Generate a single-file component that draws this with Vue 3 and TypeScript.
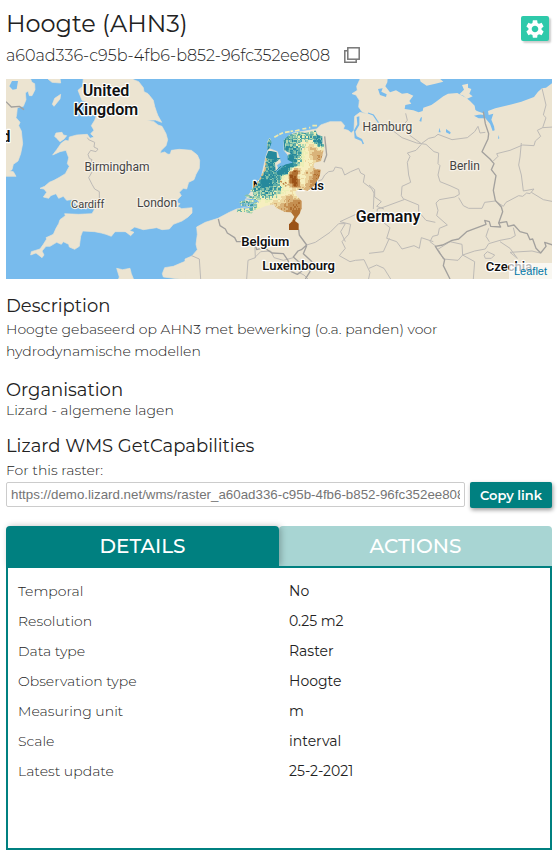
<script setup lang="ts">
import { computed, ref } from 'vue'

type Tab = 'details' | 'actions'

const uuid = 'a60ad336-c95b-4fb6-b852-96fc352ee808'
const wmsUrl = ref(`https://demo.lizard.net/wms/raster_${uuid}`)
const activeTab = ref<Tab>('details')

const details: { label: string; value: string }[] = [
  { label: 'Temporal', value: 'No' },
  { label: 'Resolution', value: '0.25 m2' },
  { label: 'Data type', value: 'Raster' },
  { label: 'Observation type', value: 'Hoogte' },
  { label: 'Measuring unit', value: 'm' },
  { label: 'Scale', value: 'interval' },
  { label: 'Latest update', value: '25-2-2021' },
]

function copy(text: string): void {
  navigator.clipboard?.writeText(text)
}

// Height raster: sample points (x, y, height 0..1) interpolated over a small grid.
const samples: [number, number, number][] = [
  [265, 240, 0], [262, 262, 0.1], [255, 300, 0.08], [238, 325, 0], [250, 345, 0.15], [275, 335, 0.2],
  [262, 285, 0.12], [225, 335, 0.1], [268, 318, 0.15], [262, 358, 0.3],
  [300, 285, 0], [285, 292, 0], [316, 270, 0], [320, 250, 0], [325, 205, 0.22], [370, 180, 0.3],
  [400, 193, 0.08], [305, 210, 0.15], [345, 185, 0.25], [412, 195, 0.15],
  [340, 228, 0.15], [335, 255, 0.25], [375, 216, 0.66], [400, 240, 0.74], [385, 232, 0.7],
  [350, 270, 0.48], [358, 235, 0.5], [366, 255, 0.58], [370, 290, 0.64], [362, 275, 0.55],
  [395, 300, 0.85], [385, 325, 0.8], [400, 290, 0.8], [370, 335, 0.72],
  [325, 312, 1], [318, 300, 0.95], [330, 290, 0.95], [334, 322, 0.95], [348, 320, 0.5], [345, 300, 0.52],
  [290, 322, 0.5], [300, 308, 0.5], [300, 345, 0.5], [270, 385, 0.66], [310, 370, 0.72], [285, 370, 0.58],
  [340, 388, 0.82], [320, 395, 0.82], [295, 395, 0.75], [330, 420, 0.88], [325, 455, 1],
  [230, 385, 0.55], [190, 385, 0.22], [175, 405, 0.35], [210, 360, 0.35], [220, 350, 0.25],
  [335, 350, 0.52], [350, 205, 0.4], [325, 225, 0.15],
]
const palette = [
  '#26899c', '#3c98a0', '#5fada6', '#86c3ac', '#b5d9b0', '#eceeb5',
  '#f6efbf', '#ecd7a0', '#d9b37a', '#c58f51', '#b06f30', '#9b5217',
]
const cell = 4

function noise(x: number, y: number): number {
  const n = Math.sin(x * 12.9898 + y * 78.233) * 43758.5453
  return n - Math.floor(n)
}

const rasterLayers = computed(() => {
  const paths: string[] = palette.map(() => '')
  for (let y = 160; y < 470; y += cell) {
    for (let x = 152; x < 424; x += cell) {
      let sum = 0
      let weight = 0
      for (const [sx, sy, h] of samples) {
        const d = (sx - x) ** 2 + (sy - y) ** 2 + 60
        const w = 1 / (d * d)
        sum += h * w
        weight += w
      }
      const base = sum / weight
      const spread = base < 0.06 ? 0.08 : base < 0.42 ? 0.36 : 0.07
      const h = base + (noise(x, y) - 0.45) * spread
      const i = Math.max(0, Math.min(palette.length - 1, Math.floor(h * palette.length)))
      paths[i] += `M${x} ${y}h${cell}v${cell}h-${cell}z`
    }
  }
  return palette.map((color, i) => ({ color, d: paths[i] }))
})
</script>

<template>
  <main class="panel">
    <header class="head">
      <div>
        <h1>Hoogte (AHN3)</h1>
        <div class="uuid">
          <span>{{ uuid }}</span>
          <button class="icon-button" type="button" aria-label="Copy UUID" @click="copy(uuid)">
            <svg viewBox="0 0 16 16" width="16" height="16" fill="none" stroke="#777" stroke-width="1.5">
              <path d="M3.8 3.8H.8v11.4h11.4v-3" />
              <rect x="3.8" y=".8" width="11.4" height="11.4" />
            </svg>
          </button>
        </div>
      </div>
      <button class="settings" type="button" aria-label="Settings">
        <svg viewBox="0 0 24 24" width="22" height="22" fill="#fff">
          <path d="M19.14 12.94c.04-.3.06-.61.06-.94 0-.32-.02-.64-.07-.94l2.03-1.58c.18-.14.23-.41.12-.61l-1.92-3.32c-.12-.22-.37-.29-.59-.22l-2.39.96c-.5-.38-1.03-.7-1.62-.94l-.36-2.54c-.04-.24-.24-.41-.48-.41h-3.84c-.24 0-.43.17-.47.41l-.36 2.54c-.59.24-1.13.57-1.62.94l-2.39-.96c-.22-.08-.47 0-.59.22L2.74 8.87c-.12.21-.08.47.12.61l2.03 1.58c-.05.3-.09.63-.09.94s.02.64.07.94l-2.03 1.58c-.18.14-.23.41-.12.61l1.92 3.32c.12.22.37.29.59.22l2.39-.96c.5.38 1.03.7 1.62.94l.36 2.54c.05.24.24.41.48.41h3.84c.24 0 .44-.17.47-.41l.36-2.54c.59-.24 1.13-.56 1.62-.94l2.39.96c.22.08.47 0 .59-.22l1.92-3.32c.12-.22.07-.47-.12-.61l-2.01-1.58zM12 15.6c-1.98 0-3.6-1.62-3.6-3.6s1.62-3.6 3.6-3.6 3.6 1.62 3.6 3.6-1.62 3.6-3.6 3.6z" />
        </svg>
      </button>
    </header>

    <div class="map">
      <svg viewBox="18 12 1638 600" preserveAspectRatio="xMidYMid slice" role="img" aria-label="Map">
        <defs>
          <clipPath id="raster-area">
            <path d="M258 228L275 232 276 248 287 250 270 264 272 288 285 274 322 262 308 254 308 240 318 236 298 226 296 196 312 180 345 170 360 174 392 166 398 180 412 184 412 205 419 210 416 225 408 258 388 264 385 276 392 282 407 284 405 300 400 312 385 335 368 348 345 342 330 350 335 362 350 378 350 400 344 416 334 430 330 438 341 446 341 465 312 465 312 448 320 440 328 425 318 412 300 411 288 405 275 400 265 388 240 394 220 402 205 406 200 416 180 410 155 412 158 402 196 398 190 392 168 392 163 380 180 376 192 380 196 370 178 362 186 358 205 366 204 352 195 346 214 332 228 306 240 282 243 245 250 228zM254 190L260 202 254 220 247 226 248 204z" />
          </clipPath>
        </defs>
        <rect x="0" y="0" width="1680" height="620" fill="#78bbed" />

        <g fill="#ece4d1" stroke="#ece4d1" stroke-width="2" stroke-linejoin="round">
          <path d="M250 8L397 8 401 14 416 20 430 38 432 50 444 56 460 76 464 94 470 112 474 122 485 142 466 135 440 136 462 140 474 150 486 154 498 176 503 194 498 212 484 226 480 235 494 231 504 238 511 237 514 226 538 223 574 226 592 240 599 256 598 280 588 298 582 314 566 322 560 342 550 340 538 352 544 362 534 372 528 382 540 386 532 394 545 401 576 398 576 414 564 426 546 438 520 448 508 462 486 464 470 458 430 464 404 456 384 470 345 470 334 484 318 478 304 474 284 470 248 468 242 484 238 514 224 523 208 516 206 508 190 500 184 508 170 502 150 514 138 514 126 528 132 540 126 548 108 534 92 540 94 530 120 522 130 508 140 492 138 488 160 478 168 460 176 446 180 434 196 422 194 416 236 418 276 416 284 402 274 392 240 394 226 386 214 374 200 376 190 364 176 370 168 356 152 362 146 370 130 366 140 352 132 342 120 340 134 334 148 322 162 316 180 306 196 296 208 274 202 266 206 248 198 226 180 230 158 240 170 224 184 204 196 196 206 198 208 186 230 180 262 178 270 190 282 186 272 176 282 166 274 152 284 136 290 120 270 116 262 104 266 90 258 80 246 76 234 46 248 34z" />
          <path d="M10 8H90L96 22 104 26 105 44 96 62 88 62 84 48 76 54 78 74 70 94 52 98 50 118 48 128 60 142 56 152 64 168 68 206 62 236 54 258 40 268 36 284 28 288 40 290 48 304 10 304z" />
          <path d="M182 58L180 72 162 94 157 88 164 70zM168 174L186 172 190 180 200 182 192 192 180 200 170 190 164 184zM144 12L156 22 182 24 180 10zM374 468L384 465 402 472 392 482zM354 616L358 606 350 580 368 584 390 580 394 596 402 616zM570 616L490 606 487 596 494 578 520 574 548 562 574 552z" />
          <path d="M555 620V552L576 543 592 524 588 508 592 478 590 456 616 442 654 430 688 412 710 402 745 396 736 374 760 340 784 306 798 244 806 220 832 230 842 262 830 270 836 290 878 262 864 240 852 226 852 196 880 174 950 162 962 150 990 140 1024 140 1034 152 1030 162 1044 166 1054 174 1062 166 1064 124 1080 112 1104 118 1086 110 1076 96 1078 76 1068 60 1056 56 1072 46 1070 34 1082 8H1670V620z" />
        </g>

        <g fill="#78bbed">
          <path d="M1163 8L1162 22 1156 34 1170 52 1188 46 1206 56 1222 54 1240 62 1228 78 1234 86 1216 90 1214 102 1240 106 1256 112 1268 108 1270 98 1294 90 1306 82 1330 64 1344 56 1372 54 1398 68 1410 78 1424 92 1426 104 1442 118 1422 122 1436 130 1456 130 1470 146 1478 168 1484 166 1482 154 1474 134 1480 116 1466 120 1464 108 1486 100 1536 88 1564 80 1602 66 1614 50 1626 40 1638 38 1660 22V8z" />
          <path d="M1134 42L1148 40 1144 50 1160 58 1158 66 1140 60zM1262 128L1266 126 1264 140 1258 138zM1318 158L1322 172 1316 172zM1338 162L1352 172 1350 178 1338 172zM1496 180L1498 190 1494 192zM36 18L54 18 50 42 38 44 28 34z" />
          <path d="M1062 166L1072 148 1070 126 1078 124 1078 150 1066 170 1070 184 1086 192 1092 206 1088 208 1084 198 1064 190z" />
        </g>
        <path d="M1104 114L1120 120 1132 138 1140 150" fill="none" stroke="#78bbed" stroke-width="4" />
        <g fill="#ece4d1">
          <path d="M1258 8L1262 20 1280 32 1306 26 1330 20 1316 8zM1386 30L1404 26 1404 38 1414 42 1408 56 1418 64 1400 72 1390 62 1378 58 1392 44zM1430 108L1448 114 1452 120 1436 118z" />
        </g>

        <g fill="none" stroke="#bdbab6" stroke-width="3" stroke-linejoin="round">
          <path d="M262 188L266 194 284 202 282 216 294 222 288 230 272 226 264 238 268 250 276 254 272 266 278 288 266 308 276 328 284 342 298 350 298 380" />
          <path d="M1217 115L1222 136 1212 148 1230 170 1228 180 1264 206 1286 190 1304 186 1314 178 1356 194 1402 188 1424 170 1434 154 1440 174 1456 172M1176 165L1206 188 1250 204 1278 208 1302 230 1316 234 1314 266 1320 272 1314 300 1320 320 1350 332 1376 344 1378 358 1364 366 1318 374 1308 384 1314 406 1310 422 1342 450 1318 460 1314 480 1298 484 1290 500 1308 514" />
          <path d="M1264 208L1248 226 1222 234 1230 244 1222 262 1226 300 1232 322 1206 334 1204 362 1212 374 1152 396 1132 402 1130 422 1102 428 1085 410 1020 440 1052 448 1046 478 1026 500 1036 520 1018 542 1050 560 1066 556 1092 554 1110 592 1104 620M1212 372L1256 390 1256 410 1278 436 1306 442M1160 490L1190 500 1206 522 1242 512 1258 520 1264 488 1300 500M1160 490L1170 458 1152 444" />
          <path d="M974 300L986 290 1000 288 1006 276 1026 280 1034 300 1052 290 1076 280 1082 294 1094 300 1090 322 1114 340 1122 354 1120 402M974 300L966 314 954 318" />
          <path d="M1376 368L1390 392 1406 400 1446 400 1454 382 1486 378 1510 394 1518 382 1556 362 1568 364 1580 354 1590 356 1602 342 1570 348 1564 300 1556 270 1560 246 1564 204M1480 258L1494 244 1490 236 1530 226 1568 210 1602 212 1606 198 1622 184 1612 166 1628 158 1660 156M1628 158L1638 128 1630 120 1638 90 1626 40M1594 352L1630 374 1660 380" />
          <path d="M1388 540L1424 528 1456 522 1466 506 1500 496 1532 490 1546 482 1540 458M1466 460L1458 484 1468 500M1388 540L1374 556 1330 552 1316 526M1388 540L1424 560 1420 612M1500 500L1530 520 1552 550 1530 532 1596 528 1620 534M1452 540L1462 530 1484 540 1474 550 1456 550zM1388 540L1386 508 1350 500 1312 524" />
          <path d="M920 510L946 502 990 472 1016 446 1036 446 1022 470 1036 500M896 592L912 600 924 612M764 496L766 548 744 556 740 612M764 548L782 530 812 528 822 548 850 556 880 548M575 542L598 552 602 612M1107 330L1124 344 1124 366 1144 380 1130 394 1152 402M1107 535L1150 530 1168 490M1107 580L1130 570 1152 580 1172 612" />
        </g>
        <g fill="none" stroke="#a3a19e" stroke-width="4" stroke-linejoin="round">
          <path d="M1450 110L1456 146 1466 176 1464 192 1446 230 1470 252 1482 266 1474 284 1488 302 1480 346 1486 376 1504 396 1508 410 1496 444 1502 456 1472 454 1468 440 1454 436 1458 448 1400 470 1376 492 1356 496 1328 510 1306 514 1320 536 1334 554 1330 572 1350 612" />
          <path d="M1496 444L1520 440 1524 454 1542 450 1560 470 1582 476 1590 494 1598 492 1608 520 1622 534 1638 514 1634 502 1658 510M18 80L34 96 58 94 72 104" />
          <path d="M655 432L660 452 676 462 682 474 704 488 710 500 742 500 762 496 770 524 792 518 816 534 850 536 864 556 874 590 892 598 906 588 900 564 880 546 894 528 904 524 920 510 898 480 896 464M920 512L910 536 936 560 930 590 916 612M972 262L980 240 974 184" />
        </g>

        <g class="country">
          <text x="318" y="63">United</text>
          <text x="318" y="121">Kingdom</text>
          <text x="18" y="200">d</text>
          <text class="mid" x="865" y="346">Netherlands</text>
          <text x="1164" y="440">Germany</text>
          <text class="mid" x="796" y="513">Belgium</text>
          <text class="mid" x="896" y="585">Luxembourg</text>
          <text class="mid" x="1527" y="587">Czechia</text>
        </g>
        <g class="city">
          <text x="351" y="289">Birmingham</text>
          <text class="small" x="263" y="398">Cardiff</text>
          <text x="471" y="396">London</text>
          <text x="1162" y="167">Hamburg</text>
          <text x="1394" y="285">Berlin</text>
        </g>

        <g transform="translate(555 0)">
          <path d="M250 220L248 204 256 190M268 187L280 180 294 173M300 172L324 168M330 168L346 164M352 162L364 160M372 158L376 158M382 152L398 152" fill="none" stroke="#efe9ad" stroke-width="5" stroke-dasharray="14 3" />
          <g clip-path="url(#raster-area)" shape-rendering="crispEdges">
            <path v-for="layer in rasterLayers" :key="layer.color" :d="layer.d" :fill="layer.color" />
          </g>
          <g fill="none" stroke="#78bbed" stroke-width="3">
            <path d="M168 386L196 388 218 376M184 372L206 374 222 382M176 400L202 396 214 388M274 290L300 266 322 262" />
          </g>
          <path d="M240 284L226 312 206 338M244 250L240 284" fill="none" stroke="#e2bd7b" stroke-width="4" stroke-dasharray="8 5" />
          <path d="M286 318L304 334M300 322L310 330M366 290V300" fill="none" stroke="#b87a3c" stroke-width="4" stroke-dasharray="6 4" />
        </g>
      </svg>
      <a class="attribution" href="https://leafletjs.com">Leaflet</a>
    </div>

    <section>
      <h2>Description</h2>
      <p>Hoogte gebaseerd op AHN3 met bewerking (o.a. panden) voor hydrodynamische modellen</p>
    </section>

    <section>
      <h2>Organisation</h2>
      <p class="tight">Lizard - algemene lagen</p>
    </section>

    <section>
      <h2>Lizard WMS GetCapabilities</h2>
      <label for="wms-url">For this raster:</label>
      <div class="link-row">
        <input id="wms-url" v-model="wmsUrl" type="text" readonly />
        <button class="copy" type="button" @click="copy(wmsUrl)">Copy link</button>
      </div>
    </section>

    <div class="tabs" role="tablist">
      <button type="button" role="tab" :aria-selected="activeTab === 'details'" :class="{ active: activeTab === 'details' }" @click="activeTab = 'details'">DETAILS</button>
      <button type="button" role="tab" :aria-selected="activeTab === 'actions'" :class="{ active: activeTab === 'actions' }" @click="activeTab = 'actions'">ACTIONS</button>
    </div>
    <div class="tab-body" role="tabpanel">
      <table v-if="activeTab === 'details'">
        <tbody>
          <tr v-for="row in details" :key="row.label">
            <th scope="row">{{ row.label }}</th>
            <td>{{ row.value }}</td>
          </tr>
        </tbody>
      </table>
    </div>
  </main>
</template>

<style>
body {
  background: #fff;
}
</style>

<style scoped>
.panel {
  box-sizing: border-box;
  min-height: 855px;
  padding: 8px 7px 5px 6px;
  display: flex;
  flex-direction: column;
  color: #222;
  font-family: Montserrat, Inter, sans-serif;
  font-size: 14px;
  font-weight: 300;
}
button {
  padding: 0;
  border: 0;
  font-family: inherit;
  cursor: pointer;
}
h1,
h2,
p {
  margin: 0;
  font-weight: 400;
}
h1 {
  font-size: 24px;
  line-height: 32px;
}
h2 {
  font-size: 18px;
  line-height: 24px;
}
p {
  font-weight: 300;
  line-height: 22px;
}
.tight {
  line-height: 16px;
}
.head {
  display: flex;
  justify-content: space-between;
  align-items: flex-start;
}
.uuid {
  display: flex;
  align-items: center;
  gap: 14px;
  height: 30px;
  margin-bottom: 9px;
  font-size: 16px;
}
.icon-button {
  display: flex;
  background: none;
}
.settings {
  display: flex;
  align-items: center;
  justify-content: center;
  width: 28px;
  height: 25px;
  margin: 8px 3px 0 0;
  border-radius: 2px;
  background: #2ec9aa;
  box-shadow: 2px 2px 2px rgba(0, 0, 0, 0.2);
}
.map {
  position: relative;
  height: 200px;
  margin-bottom: 15px;
  overflow: hidden;
}
.map > svg {
  display: block;
  width: 100%;
  height: 100%;
}
.country,
.city {
  font-family: Roboto, sans-serif;
  text-anchor: middle;
  paint-order: stroke;
  stroke: #fff;
  stroke-width: 7px;
  stroke-linejoin: round;
}
.country {
  fill: #111;
  font-size: 48px;
  font-weight: 600;
}
.country .mid {
  font-size: 39px;
}
.city {
  fill: #444;
  stroke: #f6f1e7;
  font-size: 36px;
  font-weight: 400;
}
.city .small {
  font-size: 33px;
}
.attribution {
  position: absolute;
  right: 0;
  bottom: 0;
  padding: 0 5px;
  background: rgba(255, 255, 255, 0.7);
  color: #0078a8;
  font: 11px/16px "Liberation Sans", Arial, sans-serif;
  text-decoration: none;
}
section {
  margin-bottom: 16px;
}
label {
  display: block;
  line-height: 24px;
}
.link-row {
  display: flex;
  align-items: flex-start;
  gap: 5px;
}
.link-row input {
  box-sizing: border-box;
  flex: 1;
  min-width: 0;
  height: 25px;
  padding: 0 4px;
  border: 1px solid #ccc;
  border-radius: 2px;
  color: #757575;
  font-family: "Liberation Sans", Arial, sans-serif;
}
.copy {
  width: 82px;
  height: 26px;
  border-radius: 2px;
  background: #008080;
  color: #fff;
  font-size: 13px;
  font-weight: 600;
  box-shadow: 1px 2px 4px rgba(0, 0, 0, 0.4);
}
.tabs {
  display: flex;
  margin-top: 2px;
}
.tabs button {
  flex: 1;
  height: 40px;
  border-radius: 4px 4px 0 0;
  background: #a8d5d3;
  color: #fff;
  font-size: 20px;
  font-weight: 500;
}
.tabs .active {
  position: relative;
  background: #008080;
  box-shadow: 2px 0 6px rgba(0, 0, 0, 0.25);
}
.tab-body {
  position: relative;
  flex: 1;
  padding: 8px 0;
  border: 2px solid #008080;
  background: #fff;
}
table {
  width: 100%;
  table-layout: fixed;
  border-collapse: collapse;
}
th,
td {
  height: 30px;
  padding: 0 10px;
  text-align: left;
  font-weight: 300;
}
td {
  padding: 0 10px 0 10px;
  font-weight: 400;
}
</style>
